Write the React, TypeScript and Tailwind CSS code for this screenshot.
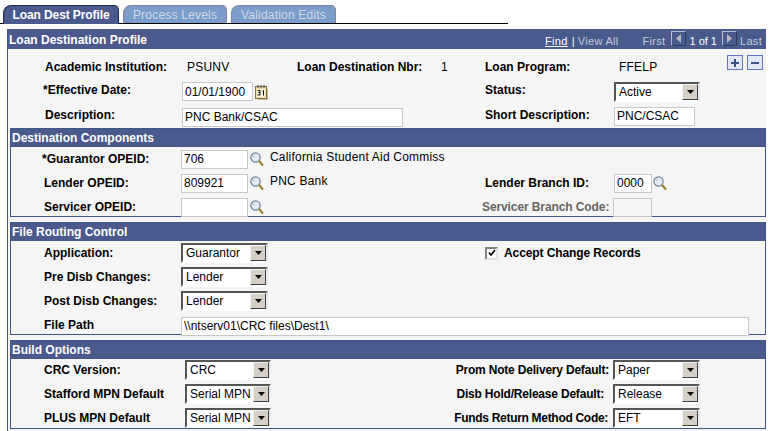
import type { ReactNode } from 'react';

const font = 'font-["Liberation_Sans",Arial,sans-serif]';

function Tab({ label, active, width }: { label: string; active?: boolean; width: string }) {
  return (
    <div
      className={`${width} rounded-tl-[8px] rounded-tr-[5px] border border-b-0 flex items-center justify-center text-[12px] ${
        active
          ? 'h-[19px] bg-[#4a5a8c] border-[#232c48] text-white font-bold tracking-[-0.1px] pb-[1px]'
          : 'h-[18px] bg-[#7c9ccb] border-[#7d8798] text-[#d0d9e8] tracking-[0.2px]'
      }`}
    >
      {label}
    </div>
  );
}

function Label({ children, className = 'text-black' }: { children: ReactNode; className?: string }) {
  return <div className={`text-[12px] font-bold whitespace-nowrap ${className}`}>{children}</div>;
}

function Value({ children, className = '' }: { children: ReactNode; className?: string }) {
  return <div className={`text-[12px] text-black whitespace-nowrap tracking-[0.2px] ${className}`}>{children}</div>;
}

function Input({ value, className = '' }: { value?: string; className?: string }) {
  return (
    <input
      readOnly
      value={value ?? ''}
      className={`h-[19px] border border-[#c8c8c8] pl-[2px] text-[12px] text-black outline-none ${className}`}
    />
  );
}

function Select({ value, width }: { value: string; width: string }) {
  return (
    <div
      className={`${width} h-[20px] shrink-0 flex items-center bg-white border-2 border-t-[#555555] border-l-[#555555] border-r-[#e8e8e8] border-b-[#ffffff]`}
    >
      <span className="flex-1 pl-[3px] text-[12px] text-black whitespace-nowrap overflow-hidden">{value}</span>
      <span className="w-[16px] h-[16px] shrink-0 bg-[#d4d0c8] border border-t-[#f4f4f4] border-l-[#f4f4f4] border-r-[#404040] border-b-[#404040] flex items-center justify-center">
        <svg width="7" height="4" viewBox="0 0 7 4">
          <path d="M0 0h7L3.5 4z" fill="#000" />
        </svg>
      </span>
    </div>
  );
}

function Lookup() {
  return (
    <svg width="14" height="15" viewBox="0 0 14 15" className="shrink-0">
      <circle cx="5.5" cy="5.5" r="4.6" fill="#e4edf7" stroke="#6f8296" strokeWidth="1.2" />
      <path d="M3 5a3 3 0 0 1 2-2" stroke="#a9bdd2" fill="none" />
      <path d="M9 9l4 4.5" stroke="#8f7f24" strokeWidth="2" />
    </svg>
  );
}

function CalendarIcon() {
  return (
    <svg width="13" height="16" viewBox="0 0 13 16" className="shrink-0">
      <rect x="0.5" y="2.5" width="11" height="12" fill="#efdca4" stroke="#85744a" />
      <rect x="2" y="5" width="8" height="8" fill="#fbf6e4" />
      <path d="M3 1v3M6 1v3M9 1v3" stroke="#4a4a4a" />
      <path d="M12.5 5v10.5H3" stroke="#c0b68c" fill="none" />
      <path d="M2.5 6.5h2.5v2H3.5h1.5v2.5H2.5M7.5 7l1-.5v5" stroke="#111" fill="none" />
    </svg>
  );
}

function Pager({ dir }: { dir: 'l' | 'r' }) {
  return (
    <span className="w-[15px] h-[15px] -mt-[6px] border border-t-[#b4bccf] border-l-[#b4bccf] border-r-[#2f3a5c] border-b-[#2f3a5c] flex items-center justify-center">
      <svg width="7" height="9" viewBox="0 0 7 9">
        <path d={dir === 'l' ? 'M6 0v9L1 4.5z' : 'M1 0v9l5-4.5z'} fill="#b4b8c2" />
      </svg>
    </span>
  );
}

function SquareBtn({ plus }: { plus?: boolean }) {
  return (
    <span className="w-[16px] h-[15px] bg-[#e2e8f8] border border-[#6078c0] flex items-center justify-center">
      <svg width="10" height="10" viewBox="0 0 10 10">
        {plus ? <path d="M1 5h8M5 1v8" stroke="#3a4f8c" strokeWidth="2" /> : <path d="M1 5h8" stroke="#3a4f8c" strokeWidth="2" />}
      </svg>
    </span>
  );
}

function Section({ title, className, children }: { title: string; className: string; children: ReactNode }) {
  return (
    <section className={`ml-[2px] border border-[#3f5688] ${className}`}>
      <h2 className="h-[18px] bg-[#4a5a8c] pl-[1px] flex items-center text-[12px] font-bold text-white">{title}</h2>
      {children}
    </section>
  );
}

const rowGrid = 'grid grid-cols-[137px_304px_129px_1fr] auto-rows-[24px] items-center pl-[33px]';
const optionsGrid = 'grid grid-cols-[141px_86px_342px_1fr] auto-rows-[24px] items-center pl-[33px] -mt-[1px]';

export default function App() {
  return (
    <div className={`w-[771px] h-[431px] overflow-hidden bg-white ${font}`}>
      <div className="h-[24px] w-[508px] pt-[5px] pl-[3px] flex items-start gap-[4px] border-b border-black">
        <Tab label="Loan Dest Profile" active width="w-[116px]" />
        <Tab label="Process Levels" width="w-[104px]" />
        <Tab label="Validation Edits" width="w-[105px]" />
      </div>

      <div className="mt-[5px] ml-[7px] w-[759px] h-[402px] bg-[#f5f5f5] border-l border-[#3f5688]">
        <header className="h-[20px] bg-[#4a5a8c] flex items-center justify-between pl-[1px] pr-[4px]">
          <h1 className="text-[12px] font-bold text-white pt-[1px]">Loan Destination Profile</h1>
          <div className="flex items-center text-[11px] tracking-[0.3px] text-[#c4cbdc] whitespace-nowrap pt-[5px]">
            <span className="text-white underline">Find</span>
            <span className="text-white ml-[4px]">|</span>
            <span className="ml-[3px]">View All</span>
            <span className="ml-[24px]">First</span>
            <span className="ml-[6px]"><Pager dir="l" /></span>
            <span className="ml-[3px] text-white tracking-normal">1 of 1</span>
            <span className="ml-[5px]"><Pager dir="r" /></span>
            <span className="ml-[3px]">Last</span>
          </div>
        </header>

        <div className="h-[79px] pt-[5px] pl-[37px] grid grid-cols-[137px_115px_144px_44px_129px_1fr] grid-rows-[25px_25px_24px] items-center">
          <Label>Academic Institution:</Label>
          <Value className="pl-[5px]">PSUNV</Value>
          <Label>Loan Destination Nbr:</Label>
          <Value>1</Value>
          <Label>Loan Program:</Label>
          <div className="flex items-center justify-between pl-[5px] pr-[3px]">
            <Value>FFELP</Value>
            <div className="flex gap-[4px] -mt-[8px]">
              <SquareBtn plus />
              <SquareBtn />
            </div>
          </div>

          <Label className="text-black -ml-[2px] -mt-[3px]">*Effective Date:</Label>
          <div className="col-span-3 flex items-center gap-[2px]">
            <Input value="01/01/1900" className="w-[71px] bg-white" />
            <CalendarIcon />
          </div>
          <Label className="text-black -mt-[3px]">Status:</Label>
          <Select value="Active" width="w-[86px]" />

          <Label className="text-black -mt-[3px]">Description:</Label>
          <div className="col-span-3">
            <Input value="PNC Bank/CSAC" className="w-[221px] bg-white" />
          </div>
          <Label className="text-black -mt-[3px]">Short Description:</Label>
          <Input value="PNC/CSAC" className="w-[81px] bg-white" />
        </div>

        <Section title="Destination Components" className="h-[89px]">
          <div className={rowGrid}>
            <Label className="text-black -ml-[2px]">*Guarantor OPEID:</Label>
            <div className="col-span-3 flex items-center">
              <Input value="706" className="w-[67px] bg-white" />
              <span className="ml-[2px]"><Lookup /></span>
              <Value className="ml-[6px] -mt-[5px]">California Student Aid Commiss</Value>
            </div>

            <Label>Lender OPEID:</Label>
            <div className="flex items-center">
              <Input value="809921" className="w-[67px] bg-white" />
              <span className="ml-[2px]"><Lookup /></span>
              <Value className="ml-[6px] -mt-[5px]">PNC Bank</Value>
            </div>
            <Label>Lender Branch ID:</Label>
            <div className="flex items-center gap-[1px]">
              <Input value="0000" className="w-[38px] bg-white" />
              <Lookup />
            </div>

            <Label>Servicer OPEID:</Label>
            <div className="flex items-center">
              <Input className="w-[67px] bg-white" />
              <span className="ml-[2px]"><Lookup /></span>
            </div>
            <Label className="-ml-[3px] text-[#666666] tracking-[-0.1px]">Servicer Branch Code:</Label>
            <Input className="w-[39px] -ml-[1px] bg-[#f5f5f5]" />
          </div>
        </Section>

        <Section title="File Routing Control" className="mt-[5px] h-[113px]">
          <div className={rowGrid}>
            <Label>Application:</Label>
            <div className="flex items-center">
              <Select value="Guarantor" width="w-[87px]" />
            </div>
            <div className="col-span-2 flex items-center gap-[6px]">
              <span className="w-[13px] h-[13px] bg-white border-2 border-t-[#808080] border-l-[#808080] border-r-[#e4e4e4] border-b-[#e4e4e4] flex items-center justify-center">
                <svg width="8" height="8" viewBox="0 0 8 8" className="shrink-0">
                  <path d="M1 3.5l2 2.5 4-5" stroke="#000" strokeWidth="1.6" fill="none" />
                </svg>
              </span>
              <Label className="text-black tracking-[-0.1px]">Accept Change Records</Label>
            </div>

            <Label>Pre Disb Changes:</Label>
            <div className="col-span-3">
              <Select value="Lender" width="w-[87px]" />
            </div>

            <Label>Post Disb Changes:</Label>
            <div className="col-span-3">
              <Select value="Lender" width="w-[87px]" />
            </div>

            <Label>File Path</Label>
            <div className="col-span-3">
              <Input value="\\ntserv01\CRC files\Dest1\" className="w-[568px] bg-white" />
            </div>
          </div>
        </Section>

        <Section title="Build Options" className="mt-[5px] h-[89px]">
          <div className={optionsGrid}>
            <Label>CRC Version:</Label>
            <Select value="CRC" width="w-[86px]" />
            <Label className="text-black text-right pr-[4px] tracking-[-0.2px]">Prom Note Delivery Default:</Label>
            <Select value="Paper" width="w-[87px]" />

            <Label>Stafford MPN Default</Label>
            <Select value="Serial MPN" width="w-[86px]" />
            <Label className="text-black text-right pr-[9px] tracking-[-0.2px]">Disb Hold/Release Default:</Label>
            <Select value="Release" width="w-[87px]" />

            <Label>PLUS MPN Default</Label>
            <Select value="Serial MPN" width="w-[86px]" />
            <Label className="text-black text-right pr-[5px] tracking-[-0.3px]">Funds Return Method Code:</Label>
            <Select value="EFT" width="w-[87px]" />
          </div>
        </Section>
      </div>
    </div>
  );
}
